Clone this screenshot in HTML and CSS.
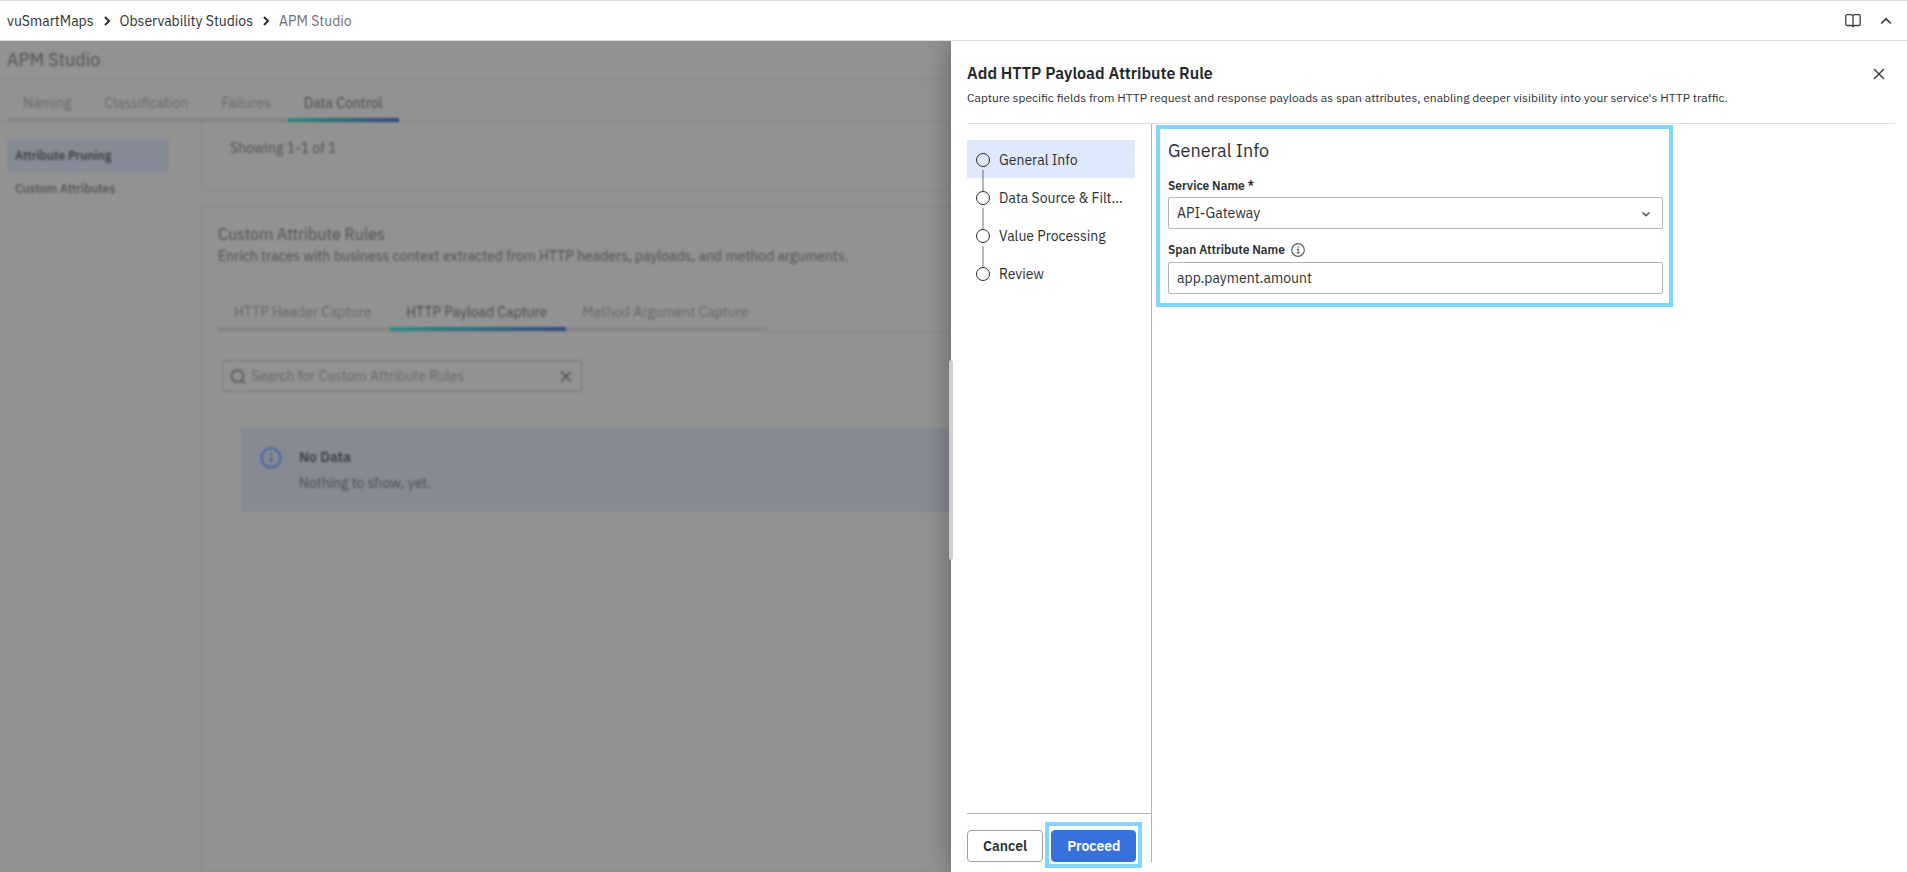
FILE: index.html
```html
<!DOCTYPE html>
<html lang="en">
<head>
<meta charset="utf-8">
<title>APM Studio</title>
<link rel="stylesheet" href="styles.css">
</head>
<body>
<header class="topbar">
  <nav class="crumbs" aria-label="Breadcrumb">
    <a href="#home">vuSmartMaps</a>
    <svg class="crumb-sep" viewBox="0 0 8 10" aria-hidden="true"><path d="M2 1l4 4-4 4"/></svg>
    <a href="#studios">Observability Studios</a>
    <svg class="crumb-sep" viewBox="0 0 8 10" aria-hidden="true"><path d="M2 1l4 4-4 4"/></svg>
    <span class="crumb-current">APM Studio</span>
  </nav>
  <div class="topbar-actions">
    <button class="icon-btn" type="button" aria-label="Documentation">
      <svg width="16" height="16" viewBox="0 0 16 16" stroke-width="1.3"><path d="M8 3.500C8 2.300 7.300 1.600 6 1.600H2.200C1.400 1.600 .8 2.100 .8 2.900V11.200C.8 12 1.400 12.500 2.200 12.500H6C7.200 12.500 8 13 8 14.200C8 13 8.800 12.500 10 12.500H13.800C14.600 12.500 15.200 12 15.200 11.200V2.900C15.200 2.100 14.600 1.600 13.800 1.600H10C8.700 1.600 8 2.300 8 3.500V14"/></svg>
    </button>
    <button class="icon-btn" type="button" aria-label="Collapse header">
      <svg width="16" height="16" viewBox="0 0 16 16" stroke-width="1.7"><path d="M3.200 10.500L8 5.800l4.800 4.700"/></svg>
    </button>
  </div>
</header>

<div class="stage">
  <main class="studio">
    <h1 class="studio-title">APM Studio</h1>
    <nav class="tabs tabs-main" aria-label="Studio sections">
      <a class="tab" href="#naming">Naming</a>
      <a class="tab" href="#classification">Classification</a>
      <a class="tab" href="#failures">Failures</a>
      <a class="tab tab-active" href="#data-control">Data Control</a>
    </nav>
    <div class="studio-body">
      <nav class="side" aria-label="Data control">
        <a class="side-item side-active" href="#pruning">Attribute Pruning</a>
        <a class="side-item" href="#custom">Custom Attributes</a>
      </nav>
      <div class="cards">
        <section class="card card-count">Showing 1-1 of 1</section>
        <section class="card card-rules">
          <h2 class="card-title">Custom Attribute Rules</h2>
          <p class="card-desc">Enrich traces with business context extracted from HTTP headers, payloads, and method arguments.</p>
          <nav class="tabs tabs-rules" aria-label="Rule types">
            <a class="tab" href="#header">HTTP Header Capture</a>
            <a class="tab tab-active" href="#payload">HTTP Payload Capture</a>
            <a class="tab" href="#method">Method Argument Capture</a>
          </nav>
          <div class="search">
            <svg width="16" height="16" viewBox="0 0 16 16" stroke-width="1.500" aria-hidden="true"><circle cx="7.500" cy="8" r="6"/><path d="M12 12.500l3 3"/></svg>
            <input type="text" placeholder="Search for Custom Attribute Rules" aria-label="Search for Custom Attribute Rules">
            <button class="search-clear" type="button" aria-label="Clear search">
              <svg width="16" height="16" viewBox="0 0 16 16" stroke-width="1.500"><path d="M3 3.500l10 10M13 3.500L3 13.500"/></svg>
            </button>
          </div>
          <div class="notice">
            <svg width="22" height="22" viewBox="0 0 22 22" stroke-width="2" aria-hidden="true"><circle cx="11" cy="11" r="9.500"/><path d="M11 10v5.500M11 6v2.200"/></svg>
            <div>
              <p class="notice-title">No Data</p>
              <p class="notice-text">Nothing to show, yet.</p>
            </div>
          </div>
        </section>
      </div>
    </div>
  </main>

  <aside class="drawer" role="dialog" aria-labelledby="drawer-title">
    <span class="drawer-grip"></span>
    <header class="drawer-head">
      <div>
        <h2 class="drawer-title" id="drawer-title">Add HTTP Payload Attribute Rule</h2>
        <p class="drawer-desc">Capture specific fields from HTTP request and response payloads as span attributes, enabling deeper visibility into your service's HTTP traffic.</p>
      </div>
      <button class="icon-btn drawer-close" type="button" aria-label="Close">
        <svg width="16" height="16" viewBox="0 0 16 16" stroke-width="1.500"><path d="M3 3l10 10M13 3L3 13"/></svg>
      </button>
    </header>
    <div class="drawer-body">
      <div class="wizard">
        <ol class="steps">
          <li class="step step-active"><span class="step-dot"></span><span class="step-name">General Info</span></li>
          <li class="step"><span class="step-dot"></span><span class="step-name">Data Source &amp; Filters</span></li>
          <li class="step"><span class="step-dot"></span><span class="step-name">Value Processing</span></li>
          <li class="step"><span class="step-dot"></span><span class="step-name">Review</span></li>
        </ol>
        <footer class="wizard-foot">
          <button class="btn" type="button">Cancel</button>
          <button class="btn btn-primary" type="button">Proceed</button>
        </footer>
      </div>
      <div class="content">
        <form class="form">
          <h3 class="form-title">General Info</h3>
          <label class="label" for="service">Service Name *</label>
          <div class="select-wrap">
            <select class="field" id="service"><option>API-Gateway</option></select>
            <svg class="select-arrow" width="10" height="10" viewBox="0 0 10 10" stroke-width="1.600" aria-hidden="true"><path d="M1.500 3.500L5 6.700l3.500-3.200"/></svg>
          </div>
          <div class="label-row">
            <label class="label" for="attr">Span Attribute Name</label>
            <svg class="info" width="14" height="14" viewBox="0 0 14 14" stroke-width="1.200" aria-hidden="true"><circle cx="7" cy="7" r="6.300"/><path d="M5.700 6.300H7.200V10M5.400 10H8.800M6.400 4.100H7.700"/></svg>
          </div>
          <input class="field" id="attr" type="text" value="app.payment.amount">
        </form>
      </div>
    </div>
  </aside>
</div>
</body>
</html>
```
FILE: styles.css
```css
* { box-sizing: border-box; }

body {
  margin: 0;
  min-height: 100vh;
  display: flex;
  flex-direction: column;
  background: #fff;
  color: #2b2f33;
  font: 14px/20px "IBM Plex Sans", "Open Sans", sans-serif;
}

h1, h2, h3, p, ol { margin: 0; padding: 0; font-weight: 400; }
a { color: inherit; text-decoration: none; }
button, input, select { font: inherit; color: inherit; }
svg { display: block; flex: none; fill: none; stroke: currentColor; }

.topbar {
  display: flex;
  justify-content: space-between;
  align-items: center;
  height: 41px;
  padding: 0 13px 0 7px;
  border-top: 1px solid #e0e0e0;
  border-bottom: 1px solid #dcdcdc;
}
.crumbs { display: flex; align-items: center; gap: 9px; padding-top: 1px; }
.crumb-sep { width: 8px; height: 10px; stroke-width: 2; }
.crumb-current { color: #6a6e73; }
.topbar-actions { display: flex; gap: 17px; }
.icon-btn { padding: 0; border: 0; background: none; color: #3a3f44; }

.stage { position: relative; flex: 1; display: flex; overflow: hidden; background: #929292; }

.studio { flex: 1; display: flex; flex-direction: column; color: #4c5052; filter: blur(1px); }
.studio-title {
  height: 39px;
  padding: 0 7px;
  border-bottom: 1px solid #8a8a8a;
  font-size: 18px;
  line-height: 38px;
}

.tabs { display: flex; border-bottom: 1px solid #8a8a8a; }
.tab { padding: 0 17px 0 16px; border-bottom: 4px solid #868686; color: #646869; }
.tab-active {
  color: #484c4e;
  border-image: linear-gradient(90deg, #2c8c80, #36497c) 1;
  border-width: 0 0 4px;
  border-style: solid;
}
.tabs-main { padding: 13px 7px 0; }
.tabs-main .tab { height: 29px; }

.studio-body { flex: 1; display: grid; grid-template-columns: 201px 1fr; }
.side { padding: 16px 32px 0 7px; font-size: 12px; font-weight: 500; }
.side-item { display: block; padding: 0 8px; line-height: 33px; }
.side-active { background: #868a94; color: #3c4043; font-weight: 600; }

.cards { display: flex; flex-direction: column; gap: 16px; }
.card { border: 1px solid #8a8a8a; border-right: 0; }
.card-count { border-top: 0; height: 67px; padding: 15px 28px; }
.card-rules { flex: 1; padding: 15px 0 0 16px; }
.card-title { font-size: 16px; line-height: 24px; }
.tabs-rules { margin-top: 36px; }
.tabs-rules .tab { height: 29px; padding-right: 19px; }

.search {
  display: flex;
  align-items: center;
  gap: 5px;
  width: 360px;
  height: 32px;
  margin: 28px 0 0 4px;
  padding: 0 7px;
  border: 1px solid #777;
  border-radius: 2px;
}
.search input { flex: 1; min-width: 0; padding: 0; border: 0; background: none; }
.search input::placeholder { color: #646869; opacity: 1; }
.search-clear { padding: 0; border: 0; background: none; }

.notice {
  display: flex;
  gap: 17px;
  margin: 36px 0 0 23px;
  padding: 18px;
  border: 1px solid #7f8798;
  background: #868a92;
}
.notice svg { color: #3f659f; }
.notice-title { font-weight: 600; color: #3c4043; }
.notice-text { margin-top: 6px; }

.drawer {
  position: absolute;
  top: 0;
  right: 0;
  bottom: 0;
  width: 50.13%;
  display: flex;
  flex-direction: column;
  padding: 0 12px 10px 16px;
  background: #fff;
  box-shadow: 0 0 24px rgba(0, 0, 0, .35);
}
.drawer-grip {
  position: absolute;
  left: -2px;
  top: 319px;
  width: 4px;
  height: 200px;
  border-radius: 2px;
  background: #cfcfcf;
}
.drawer-head {
  display: flex;
  justify-content: space-between;
  padding: 19px 8px 15px 0;
  border-bottom: 1px solid #e0e0e0;
}
.drawer-title { font-size: 16px; line-height: 26px; font-weight: 600; color: #23272b; }
.drawer-desc { margin-top: 2px; font-size: 12px; }
.drawer-close { align-self: flex-start; margin-top: 6px; }

.drawer-body { flex: 1; display: grid; grid-template-columns: 185px 1fr; }
.wizard { display: flex; flex-direction: column; border-right: 1px solid #b5b5b5; }
.steps { flex: 1; padding: 16px 16px 0 0; list-style: none; }
.step { position: relative; display: flex; align-items: center; gap: 9px; height: 38px; padding: 1px 8px 0 9px; }
.step-active { background: #e0e9fb; }
.step-dot { flex: none; width: 14px; height: 14px; border: 1px solid #2b2f33; border-radius: 50%; }
.step-name { overflow: hidden; white-space: nowrap; text-overflow: ellipsis; }
.step:not(:last-child)::after {
  content: "";
  position: absolute;
  z-index: 1;
  left: 15px;
  top: 30px;
  width: 2px;
  height: 21px;
  background: rgba(0, 0, 0, .28);
}

.wizard-foot { display: flex; gap: 8px; padding-top: 16px; border-top: 1px solid #b5b5b5; }
.btn {
  height: 32px;
  padding: 0 15px;
  border: 1px solid #a0a0a0;
  border-radius: 4px;
  background: #fff;
  font-weight: 600;
}
.btn-primary { position: relative; border-color: #3871dc; background: #3871dc; color: #fff; }
.btn-primary::after { content: ""; position: absolute; inset: -9px -7px -7px; border: 4px solid #82d5ff; }

.content { padding: 1px 0 0 4px; }
.form {
  width: 70%;
  padding: 8px 6px 9px 8px;
  border: 4px solid #82d5ff;
}
.form-title { font-size: 18px; line-height: 28px; }
.label { display: block; font-size: 12px; font-weight: 600; }
.form-title + .label { margin-top: 11px; }
.label-row { display: flex; align-items: center; gap: 6px; margin: 11px 0 2px; }
.info { color: #5c6065; }
.select-wrap { position: relative; margin-top: 1px; }
.select-arrow { position: absolute; right: 12px; top: 12px; color: #565a5e; }
.field {
  display: block;
  width: 100%;
  height: 32px;
  padding: 0 8px;
  border: 1px solid #b4b4bc;
  border-radius: 2px;
  background: #fff;
  appearance: none;
}
```
